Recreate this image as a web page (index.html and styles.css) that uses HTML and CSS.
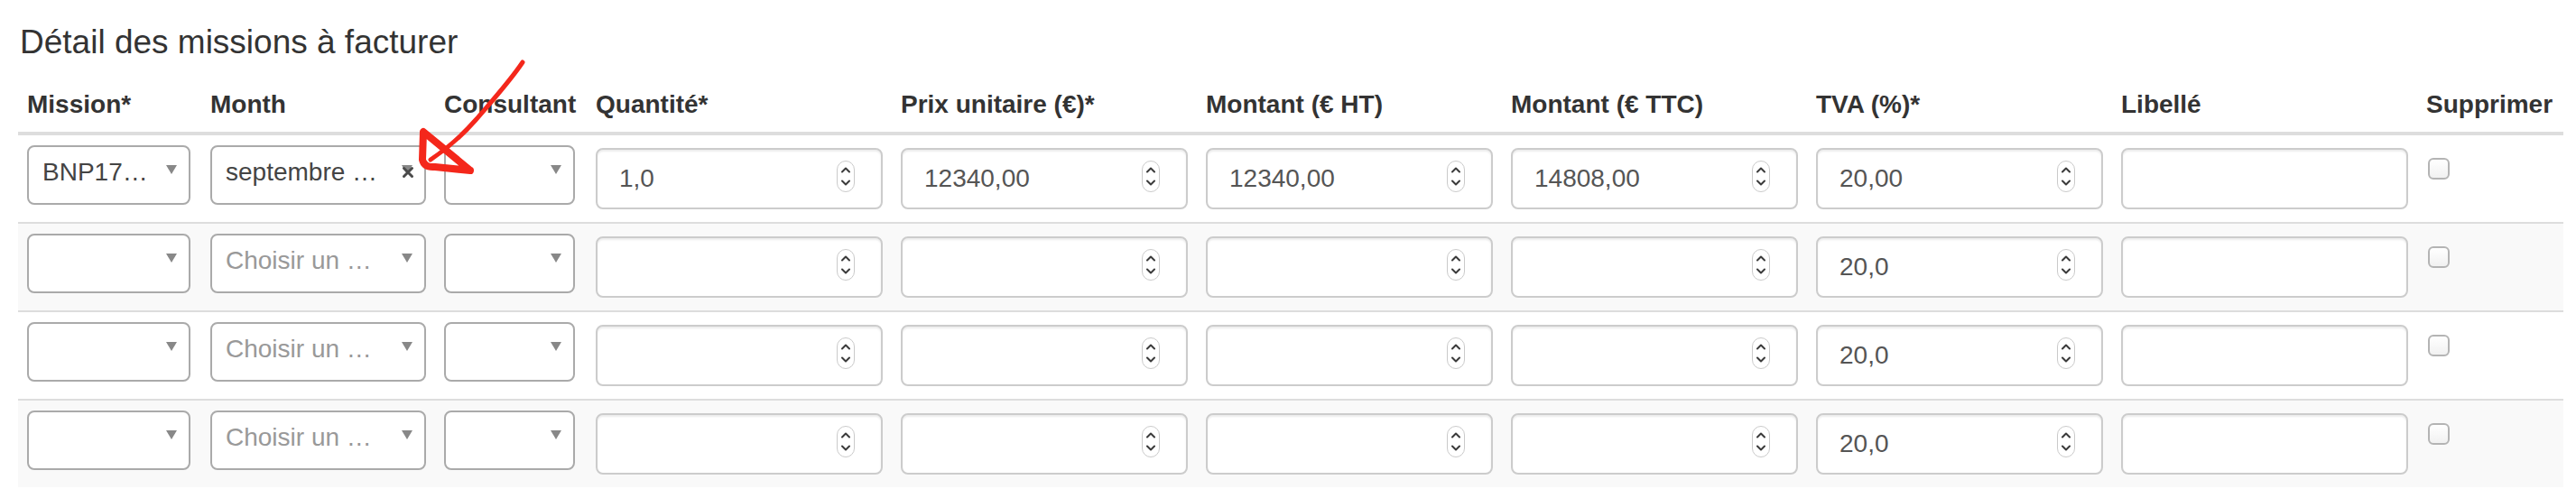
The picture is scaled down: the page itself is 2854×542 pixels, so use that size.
FILE: index.html
```html
<!DOCTYPE html>
<html lang="fr">
<head>
<meta charset="utf-8">
<title>Détail des missions à facturer</title>
<link rel="stylesheet" href="styles.css">
</head>
<body>
<div class="page">
  <h2 class="title">Détail des missions à facturer</h2>
  <table class="grid">
    <colgroup>
      <col class="c-mission"><col class="c-month"><col class="c-consult">
      <col class="c-num"><col class="c-num"><col class="c-num"><col class="c-num"><col class="c-num"><col class="c-num">
      <col>
    </colgroup>
    <thead>
      <tr>
        <th>Mission*</th><th>Month</th><th>Consultant</th><th>Quantité*</th><th>Prix unitaire (€)*</th>
        <th>Montant (€ HT)</th><th>Montant (€ TTC)</th><th>TVA (%)*</th><th>Libellé</th><th>Supprimer</th>
      </tr>
    </thead>
    <tbody>
      <tr>
        <td><div class="sel sel-mission"><span class="sel-text">BNP17…</span><span class="sel-arrow"></span></div></td>
        <td><div class="sel sel-month"><span class="sel-text">septembre …</span><span class="sel-arrow"></span>
          <svg class="sel-clear" width="14" height="14" viewBox="0 0 14 14"><path d="M2.5 2.5 L11.5 11.5 M11.5 2.5 L2.5 11.5" stroke="#4a4a4a" stroke-width="3" stroke-linecap="round"/></svg></div></td>
        <td><div class="sel sel-consult"><span class="sel-text"></span><span class="sel-arrow"></span></div></td>
        <td><div class="num"><span class="num-val">1,0</span><svg class="spin" width="20" height="35" viewBox="0 0 20 35"><rect x="0.5" y="0.5" width="19" height="34" rx="9.5" fill="#fff" stroke="#cacaca"/><path d="M6 12.5 L10 8.5 L14 12.5 M6 22.5 L10 26.5 L14 22.5" stroke="#3a3a3a" stroke-width="2" fill="none" stroke-linecap="round" stroke-linejoin="round"/></svg></div></td>
        <td><div class="num"><span class="num-val">12340,00</span><svg class="spin" width="20" height="35" viewBox="0 0 20 35"><rect x="0.5" y="0.5" width="19" height="34" rx="9.5" fill="#fff" stroke="#cacaca"/><path d="M6 12.5 L10 8.5 L14 12.5 M6 22.5 L10 26.5 L14 22.5" stroke="#3a3a3a" stroke-width="2" fill="none" stroke-linecap="round" stroke-linejoin="round"/></svg></div></td>
        <td><div class="num"><span class="num-val">12340,00</span><svg class="spin" width="20" height="35" viewBox="0 0 20 35"><rect x="0.5" y="0.5" width="19" height="34" rx="9.5" fill="#fff" stroke="#cacaca"/><path d="M6 12.5 L10 8.5 L14 12.5 M6 22.5 L10 26.5 L14 22.5" stroke="#3a3a3a" stroke-width="2" fill="none" stroke-linecap="round" stroke-linejoin="round"/></svg></div></td>
        <td><div class="num"><span class="num-val">14808,00</span><svg class="spin" width="20" height="35" viewBox="0 0 20 35"><rect x="0.5" y="0.5" width="19" height="34" rx="9.5" fill="#fff" stroke="#cacaca"/><path d="M6 12.5 L10 8.5 L14 12.5 M6 22.5 L10 26.5 L14 22.5" stroke="#3a3a3a" stroke-width="2" fill="none" stroke-linecap="round" stroke-linejoin="round"/></svg></div></td>
        <td><div class="num"><span class="num-val">20,00</span><svg class="spin" width="20" height="35" viewBox="0 0 20 35"><rect x="0.5" y="0.5" width="19" height="34" rx="9.5" fill="#fff" stroke="#cacaca"/><path d="M6 12.5 L10 8.5 L14 12.5 M6 22.5 L10 26.5 L14 22.5" stroke="#3a3a3a" stroke-width="2" fill="none" stroke-linecap="round" stroke-linejoin="round"/></svg></div></td>
        <td><div class="num"><span class="num-val"></span></div></td>
        <td><div class="chk"></div></td>
      </tr>
      <tr>
        <td><div class="sel sel-mission"><span class="sel-text"></span><span class="sel-arrow"></span></div></td>
        <td><div class="sel sel-month"><span class="sel-text sel-ph">Choisir un …</span><span class="sel-arrow"></span></div></td>
        <td><div class="sel sel-consult"><span class="sel-text"></span><span class="sel-arrow"></span></div></td>
        <td><div class="num"><span class="num-val"></span><svg class="spin" width="20" height="35" viewBox="0 0 20 35"><rect x="0.5" y="0.5" width="19" height="34" rx="9.5" fill="#fff" stroke="#cacaca"/><path d="M6 12.5 L10 8.5 L14 12.5 M6 22.5 L10 26.5 L14 22.5" stroke="#3a3a3a" stroke-width="2" fill="none" stroke-linecap="round" stroke-linejoin="round"/></svg></div></td>
        <td><div class="num"><span class="num-val"></span><svg class="spin" width="20" height="35" viewBox="0 0 20 35"><rect x="0.5" y="0.5" width="19" height="34" rx="9.5" fill="#fff" stroke="#cacaca"/><path d="M6 12.5 L10 8.5 L14 12.5 M6 22.5 L10 26.5 L14 22.5" stroke="#3a3a3a" stroke-width="2" fill="none" stroke-linecap="round" stroke-linejoin="round"/></svg></div></td>
        <td><div class="num"><span class="num-val"></span><svg class="spin" width="20" height="35" viewBox="0 0 20 35"><rect x="0.5" y="0.5" width="19" height="34" rx="9.5" fill="#fff" stroke="#cacaca"/><path d="M6 12.5 L10 8.5 L14 12.5 M6 22.5 L10 26.5 L14 22.5" stroke="#3a3a3a" stroke-width="2" fill="none" stroke-linecap="round" stroke-linejoin="round"/></svg></div></td>
        <td><div class="num"><span class="num-val"></span><svg class="spin" width="20" height="35" viewBox="0 0 20 35"><rect x="0.5" y="0.5" width="19" height="34" rx="9.5" fill="#fff" stroke="#cacaca"/><path d="M6 12.5 L10 8.5 L14 12.5 M6 22.5 L10 26.5 L14 22.5" stroke="#3a3a3a" stroke-width="2" fill="none" stroke-linecap="round" stroke-linejoin="round"/></svg></div></td>
        <td><div class="num"><span class="num-val">20,0</span><svg class="spin" width="20" height="35" viewBox="0 0 20 35"><rect x="0.5" y="0.5" width="19" height="34" rx="9.5" fill="#fff" stroke="#cacaca"/><path d="M6 12.5 L10 8.5 L14 12.5 M6 22.5 L10 26.5 L14 22.5" stroke="#3a3a3a" stroke-width="2" fill="none" stroke-linecap="round" stroke-linejoin="round"/></svg></div></td>
        <td><div class="num"><span class="num-val"></span></div></td>
        <td><div class="chk"></div></td>
      </tr>
      <tr>
        <td><div class="sel sel-mission"><span class="sel-text"></span><span class="sel-arrow"></span></div></td>
        <td><div class="sel sel-month"><span class="sel-text sel-ph">Choisir un …</span><span class="sel-arrow"></span></div></td>
        <td><div class="sel sel-consult"><span class="sel-text"></span><span class="sel-arrow"></span></div></td>
        <td><div class="num"><span class="num-val"></span><svg class="spin" width="20" height="35" viewBox="0 0 20 35"><rect x="0.5" y="0.5" width="19" height="34" rx="9.5" fill="#fff" stroke="#cacaca"/><path d="M6 12.5 L10 8.5 L14 12.5 M6 22.5 L10 26.5 L14 22.5" stroke="#3a3a3a" stroke-width="2" fill="none" stroke-linecap="round" stroke-linejoin="round"/></svg></div></td>
        <td><div class="num"><span class="num-val"></span><svg class="spin" width="20" height="35" viewBox="0 0 20 35"><rect x="0.5" y="0.5" width="19" height="34" rx="9.5" fill="#fff" stroke="#cacaca"/><path d="M6 12.5 L10 8.5 L14 12.5 M6 22.5 L10 26.5 L14 22.5" stroke="#3a3a3a" stroke-width="2" fill="none" stroke-linecap="round" stroke-linejoin="round"/></svg></div></td>
        <td><div class="num"><span class="num-val"></span><svg class="spin" width="20" height="35" viewBox="0 0 20 35"><rect x="0.5" y="0.5" width="19" height="34" rx="9.5" fill="#fff" stroke="#cacaca"/><path d="M6 12.5 L10 8.5 L14 12.5 M6 22.5 L10 26.5 L14 22.5" stroke="#3a3a3a" stroke-width="2" fill="none" stroke-linecap="round" stroke-linejoin="round"/></svg></div></td>
        <td><div class="num"><span class="num-val"></span><svg class="spin" width="20" height="35" viewBox="0 0 20 35"><rect x="0.5" y="0.5" width="19" height="34" rx="9.5" fill="#fff" stroke="#cacaca"/><path d="M6 12.5 L10 8.5 L14 12.5 M6 22.5 L10 26.5 L14 22.5" stroke="#3a3a3a" stroke-width="2" fill="none" stroke-linecap="round" stroke-linejoin="round"/></svg></div></td>
        <td><div class="num"><span class="num-val">20,0</span><svg class="spin" width="20" height="35" viewBox="0 0 20 35"><rect x="0.5" y="0.5" width="19" height="34" rx="9.5" fill="#fff" stroke="#cacaca"/><path d="M6 12.5 L10 8.5 L14 12.5 M6 22.5 L10 26.5 L14 22.5" stroke="#3a3a3a" stroke-width="2" fill="none" stroke-linecap="round" stroke-linejoin="round"/></svg></div></td>
        <td><div class="num"><span class="num-val"></span></div></td>
        <td><div class="chk"></div></td>
      </tr>
      <tr>
        <td><div class="sel sel-mission"><span class="sel-text"></span><span class="sel-arrow"></span></div></td>
        <td><div class="sel sel-month"><span class="sel-text sel-ph">Choisir un …</span><span class="sel-arrow"></span></div></td>
        <td><div class="sel sel-consult"><span class="sel-text"></span><span class="sel-arrow"></span></div></td>
        <td><div class="num"><span class="num-val"></span><svg class="spin" width="20" height="35" viewBox="0 0 20 35"><rect x="0.5" y="0.5" width="19" height="34" rx="9.5" fill="#fff" stroke="#cacaca"/><path d="M6 12.5 L10 8.5 L14 12.5 M6 22.5 L10 26.5 L14 22.5" stroke="#3a3a3a" stroke-width="2" fill="none" stroke-linecap="round" stroke-linejoin="round"/></svg></div></td>
        <td><div class="num"><span class="num-val"></span><svg class="spin" width="20" height="35" viewBox="0 0 20 35"><rect x="0.5" y="0.5" width="19" height="34" rx="9.5" fill="#fff" stroke="#cacaca"/><path d="M6 12.5 L10 8.5 L14 12.5 M6 22.5 L10 26.5 L14 22.5" stroke="#3a3a3a" stroke-width="2" fill="none" stroke-linecap="round" stroke-linejoin="round"/></svg></div></td>
        <td><div class="num"><span class="num-val"></span><svg class="spin" width="20" height="35" viewBox="0 0 20 35"><rect x="0.5" y="0.5" width="19" height="34" rx="9.5" fill="#fff" stroke="#cacaca"/><path d="M6 12.5 L10 8.5 L14 12.5 M6 22.5 L10 26.5 L14 22.5" stroke="#3a3a3a" stroke-width="2" fill="none" stroke-linecap="round" stroke-linejoin="round"/></svg></div></td>
        <td><div class="num"><span class="num-val"></span><svg class="spin" width="20" height="35" viewBox="0 0 20 35"><rect x="0.5" y="0.5" width="19" height="34" rx="9.5" fill="#fff" stroke="#cacaca"/><path d="M6 12.5 L10 8.5 L14 12.5 M6 22.5 L10 26.5 L14 22.5" stroke="#3a3a3a" stroke-width="2" fill="none" stroke-linecap="round" stroke-linejoin="round"/></svg></div></td>
        <td><div class="num"><span class="num-val">20,0</span><svg class="spin" width="20" height="35" viewBox="0 0 20 35"><rect x="0.5" y="0.5" width="19" height="34" rx="9.5" fill="#fff" stroke="#cacaca"/><path d="M6 12.5 L10 8.5 L14 12.5 M6 22.5 L10 26.5 L14 22.5" stroke="#3a3a3a" stroke-width="2" fill="none" stroke-linecap="round" stroke-linejoin="round"/></svg></div></td>
        <td><div class="num"><span class="num-val"></span></div></td>
        <td><div class="chk"></div></td>
      </tr>
    </tbody>
  </table>
</div>
<svg class="annot" width="2854" height="542" viewBox="0 0 2854 542">
  <path d="M579 69 C565 90 545 112 527 133 C512 150 495 165 477 177" stroke="#f4271b" stroke-width="5" fill="none" stroke-linecap="round"/>
  <path d="M520 188 L469 146 L468 177 Q470 186 482 185 L521 189" stroke="#f4271b" stroke-width="8" fill="none" stroke-linecap="round" stroke-linejoin="round"/>
</svg>
</body>
</html>
```

FILE: styles.css
```css
html, body {
  margin: 0;
  padding: 0;
  background: #fff;
}

body {
  font-family: "Liberation Sans", Arial, Helvetica, sans-serif;
  color: #333;
  width: 2854px;
  height: 542px;
  overflow: hidden;
  position: relative;
}

.page {
  padding: 0 14px 0 20px;
}

.title {
  margin: 27px 0 19px 2px;
  font-size: 37px;
  line-height: 40px;
  font-weight: 400;
  color: #333;
}

.grid {
  width: 100%;
  table-layout: fixed;
  border-collapse: separate;
  border-spacing: 0;
}

.c-mission { width: 203px; }
.c-month { width: 259px; }
.c-consult { width: 168px; }
.c-num { width: 338px; }

.grid th {
  text-align: left;
  font-size: 28px;
  line-height: 40px;
  font-weight: 700;
  color: #333;
  padding: 10px 10px 10px 10px;
  border-bottom: 4px solid #ddd;
  white-space: nowrap;
  vertical-align: bottom;
}

.grid td {
  padding: 14px 10px 14px 10px;
  vertical-align: top;
  border-top: 2px solid #ddd;
  height: 68px;
}

.grid tbody tr:first-child td {
  border-top: 0;
}

.grid tbody tr:nth-child(even) td {
  background: #f9f9f9;
}

/* select2-like boxes */
.sel {
  position: relative;
  display: flex;
  align-items: flex-start;
  box-sizing: border-box;
  height: 66px;
  margin-top: -3px;
  border: 2px solid #aaa;
  border-radius: 8px;
  background: #fff;
  padding-left: 15px;
}

.sel-mission { width: 181px; }
.sel-month { width: 239px; }
.sel-consult { width: 145px; }

.sel-text {
  flex: 1;
  min-width: 0;
  font-size: 28px;
  line-height: 56px;
  color: #444;
  white-space: nowrap;
  overflow: hidden;
}

.sel-ph {
  color: #999;
}

.sel-arrow {
  width: 0;
  height: 0;
  margin: 20px 13px 0 8px;
  border-left: 6.5px solid transparent;
  border-right: 6.5px solid transparent;
  border-top: 10px solid #888;
}

.sel-clear {
  position: absolute;
  right: 11px;
  top: 21px;
}

/* number inputs */
.num {
  display: flex;
  align-items: center;
  box-sizing: border-box;
  width: 318px;
  height: 68px;
  border: 2px solid #ccc;
  border-radius: 8px;
  background: #fff;
  box-shadow: inset 0 2px 2px rgba(0, 0, 0, 0.075);
  padding: 0 29px 0 24px;
}

.num-val {
  flex: 1;
  font-size: 28px;
  line-height: 40px;
  color: #555;
  white-space: nowrap;
}

.spin {
  display: block;
  flex: none;
  margin-bottom: 5px;
}

/* checkbox */
.chk {
  box-sizing: border-box;
  width: 24px;
  height: 24px;
  margin: 11px 0 0 2px;
  border: 2px solid #b4b4b4;
  border-radius: 6px;
  background: linear-gradient(#fff, #f1f1f1);
}

/* hand-drawn annotation overlay */
.annot {
  position: absolute;
  left: 0;
  top: 0;
  pointer-events: none;
}
```
